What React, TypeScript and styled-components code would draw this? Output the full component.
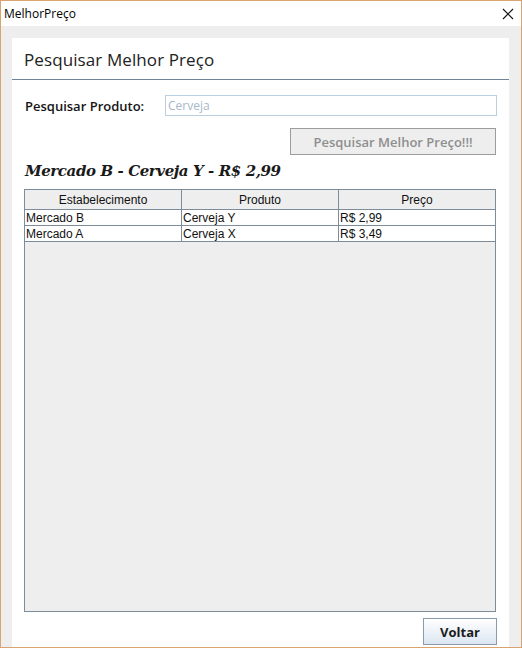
import styled, {createGlobalStyle} from "styled-components";

const GlobalStyle = createGlobalStyle`
  html, body {
    margin: 0;
    padding: 0;
    overflow: hidden;
  }
  * {
    box-sizing: border-box;
  }
`

const Window = styled.div`
  width: 522px;
  height: 648px;
  border: 1px solid #d9a46f;
  display: flex;
  flex-direction: column;
  background: #ffffff;
  font-family: "Open Sans", "Noto Sans", sans-serif;
`

const TitleBar = styled.div`
  height: 25px;
  display: flex;
  align-items: center;
  justify-content: space-between;
  padding: 0 7px 0 3px;
  background: #ffffff;
  font-size: 12px;
  color: #000;
`

const CloseIcon = () => (
  <svg width="12" height="12" viewBox="0 0 12 12">
    <path d="M1 1 L11 11 M11 1 L1 11" stroke="#111" strokeWidth="1.1" fill="none" />
  </svg>
)

const Content = styled.div`
  flex: 1;
  display: flex;
  background: #eeeeee;
  padding: 12px 12px 0 11px;
  min-height: 0;
`

const Panel = styled.div`
  flex: 1;
  display: flex;
  flex-direction: column;
  background: #ffffff;
  min-height: 0;
`

const PanelHeader = styled.div`
  height: 42px;
  display: flex;
  align-items: center;
  padding: 2px 0 0 12px;
  border-bottom: 1px solid #6f8399;
  font-size: 17px;
  letter-spacing: 0.1px;
  color: #222;
`

const PanelBody = styled.div`
  flex: 1;
  display: flex;
  flex-direction: column;
  padding: 15px 13px 2px 12px;
  min-height: 0;
`

const SearchRow = styled.div`
  display: flex;
  align-items: center;
  gap: 17px;
  padding-left: 1px;
`

const Label = styled.label`
  width: 123px;
  font-size: 13px;
  font-weight: 600;
  color: #151515;
`

const Input = styled.input`
  flex: 1;
  height: 21px;
  margin-right: -1px;
  border: 1px solid #b9cfe2;
  padding: 0 2px;
  font-family: "Open Sans", "Noto Sans", sans-serif;
  font-size: 12px;
  color: #333;
  outline: none;

  &::placeholder {
    color: #a6b8ca;
  }
`

const ActionRow = styled.div`
  display: flex;
  justify-content: flex-end;
  margin-top: 12px;
`

const GrayButton = styled.button`
  width: 206px;
  height: 27px;
  border: 1px solid #9c9c9c;
  background: #eeeeee;
  color: #8e8e8e;
  font-family: "Open Sans", "Noto Sans", sans-serif;
  font-size: 13px;
  font-weight: 600;
  padding: 0;
`

const Result = styled.div`
  margin-top: 7px;
  height: 21px;
  padding-left: 1px;
  font-family: "DejaVu Serif", "Liberation Serif", serif;
  font-style: italic;
  font-weight: bold;
  font-size: 15px;
  color: #1a1a1a;
  letter-spacing: -0.4px;
`

const TableBox = styled.div`
  margin-top: 6px;
  flex: 1;
  display: flex;
  flex-direction: column;
  border: 1px solid #7d8c9a;
  background: #eeeeee;
  min-height: 0;
`

const Grid = styled.div`
  display: grid;
  grid-template-columns: 157px 157px 156px;
  font-family: "Liberation Sans", Arial, sans-serif;
  font-size: 12px;
  color: #111;
`

const HeadCell = styled.div<{$last?: boolean}>`
  height: 20px;
  display: flex;
  align-items: center;
  justify-content: center;
  background: #eeeeee;
  border-right: ${p => (p.$last ? "none" : "1px solid #7d8c9a")};
  border-bottom: 1px solid #7d8c9a;
`

const Cell = styled.div<{$last?: boolean}>`
  height: 16px;
  display: flex;
  align-items: center;
  padding-left: 1px;
  background: #ffffff;
  border-right: 1px solid #7d8c9a;
  border-bottom: 1px solid #7d8c9a;
  margin-right: ${p => (p.$last ? "-1px" : "0")};
`

const Footer = styled.div`
  display: flex;
  justify-content: flex-end;
  padding: 6px 0 0;
`

const BlueButton = styled.button`
  width: 74px;
  height: 27px;
  margin-right: -1px;
  border: 1px solid #8a9bab;
  background: linear-gradient(#ffffff, #dbe6f2);
  color: #1c1c1c;
  font-family: "Open Sans", "Noto Sans", sans-serif;
  font-size: 13px;
  font-weight: bold;
  padding: 0;
`

const rows = [
  {store: "Mercado B", product: "Cerveja Y", price: "R$ 2,99"},
  {store: "Mercado A", product: "Cerveja X", price: "R$ 3,49"},
];

const App = () => {
  return (
    <>
      <GlobalStyle />
      <Window>
        <TitleBar>
          <span>MelhorPreço</span>
          <CloseIcon />
        </TitleBar>
        <Content>
          <Panel>
            <PanelHeader>Pesquisar Melhor Preço</PanelHeader>
            <PanelBody>
              <SearchRow>
                <Label>Pesquisar Produto:</Label>
                <Input placeholder="Cerveja" />
              </SearchRow>
              <ActionRow>
                <GrayButton>Pesquisar Melhor Preço!!!</GrayButton>
              </ActionRow>
              <Result>Mercado B - Cerveja Y - R$ 2,99</Result>
              <TableBox>
                <Grid>
                  <HeadCell>Estabelecimento</HeadCell>
                  <HeadCell>Produto</HeadCell>
                  <HeadCell $last>Preço</HeadCell>
                  {rows.map(r => (
                    <>
                      <Cell key={r.store + "a"}>{r.store}</Cell>
                      <Cell key={r.store + "b"}>{r.product}</Cell>
                      <Cell key={r.store + "c"} $last>{r.price}</Cell>
                    </>
                  ))}
                </Grid>
              </TableBox>
              <Footer>
                <BlueButton>Voltar</BlueButton>
              </Footer>
            </PanelBody>
          </Panel>
        </Content>
      </Window>
    </>
  );
}

export default App;
